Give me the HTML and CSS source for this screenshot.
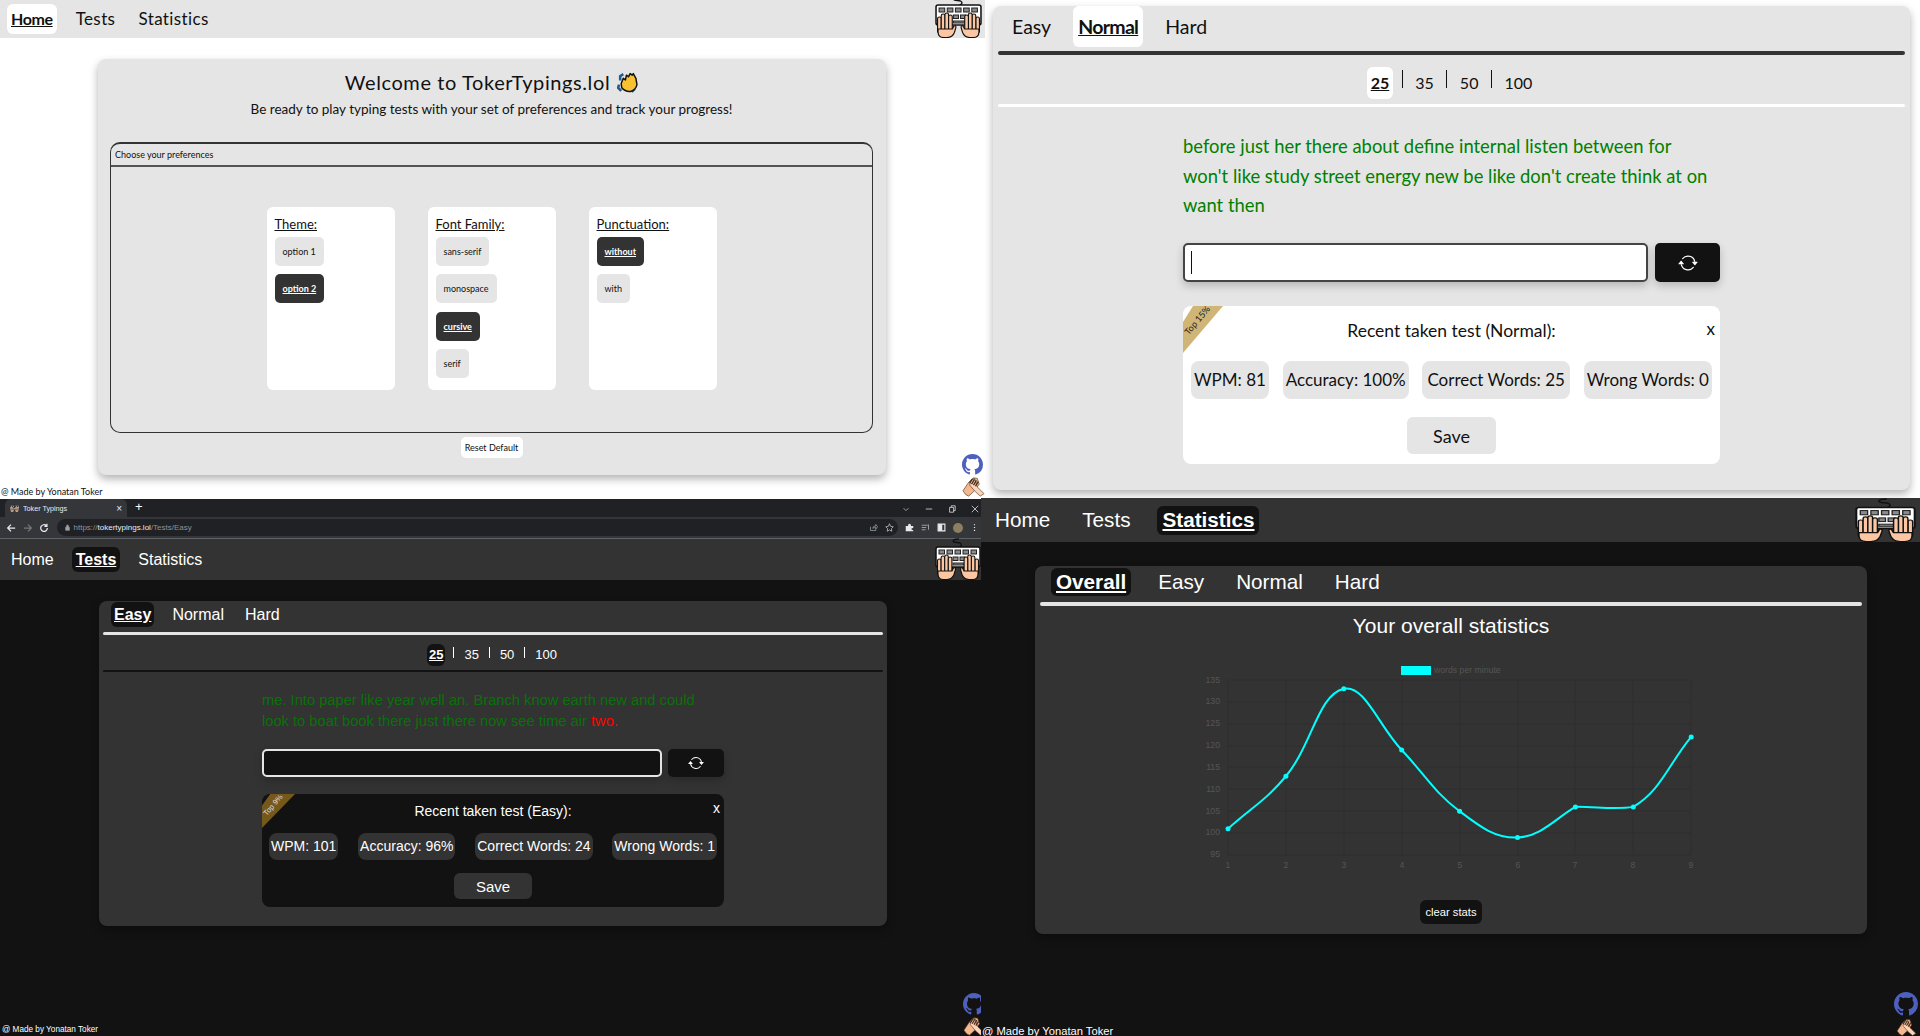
FILE: index.html

```html
<!DOCTYPE html>
<html lang="en">
<head>
    <meta charset="UTF-8">
    <title>Toker Typings</title>
    <link rel="stylesheet" href="styles.css">
</head>
<body>
    <svg class="icon-defs" width="0" height="0">
        <symbol id="logo" viewBox="0 0 46 42" preserveAspectRatio="none">
            <path d="M21 10 C28 9 28 4.500 22 4.500 C16 4.500 17 1 24 1" fill="none" stroke="#111" stroke-width="1.300"/>
            <rect x="1" y="9" width="44" height="20" rx="2" fill="#fff" stroke="#111" stroke-width="1.500"/>
            <g fill="#8a8a8a" stroke="#222" stroke-width="1">
                <rect x="4" y="12" width="5.500" height="4"/>
                <rect x="12" y="12" width="5.500" height="4"/>
                <rect x="20" y="12" width="5.500" height="4"/>
                <rect x="28" y="12" width="5.500" height="4"/>
                <rect x="36" y="12" width="5.500" height="4"/>
                <rect x="18" y="19" width="5" height="3.500"/>
                <rect x="25" y="19" width="5" height="3.500"/>
                <rect x="18" y="25" width="11" height="2"/>
            </g>
            <g id="logo-hand" fill="#fcc6a2" stroke="#111" stroke-width="1.100">
                <rect x="2.500" y="21" width="3.600" height="16" rx="1.800"/>
                <rect x="6.100" y="18" width="3.600" height="18" rx="1.800"/>
                <rect x="9.700" y="17" width="3.600" height="19" rx="1.800"/>
                <rect x="13.300" y="19" width="3.600" height="17" rx="1.800"/>
                <path d="M3 33 H17 L18.500 30 Q20.500 29 20.500 31.500 L19 36.500 Q17 41.500 12 41.500 H8.500 Q3 41.500 3 36 Z"/>
            </g>
            <use href="#logo-hand" transform="matrix(-1 0 0 1 46 0)"/>
        </symbol>
        <symbol id="github" viewBox="0 0 16 16">
            <path fill="#4f5fbd" d="M8 0C3.58 0 0 3.58 0 8c0 3.54 2.29 6.53 5.47 7.59.4.07.55-.17.55-.38 0-.19-.01-.82-.01-1.49-2.01.37-2.53-.49-2.69-.94-.09-.23-.48-.94-.82-1.13-.28-.15-.68-.52-.01-.53.63-.01 1.08.58 1.23.82.72 1.21 1.87.87 2.33.66.07-.52.28-.87.51-1.07-1.78-.2-3.64-.89-3.64-3.95 0-.87.31-1.59.82-2.15-.08-.2-.36-1.02.08-2.12 0 0 .67-.21 2.2.82.64-.18 1.32-.27 2-.27.68 0 1.36.09 2 .27 1.53-1.04 2.2-.82 2.2-.82.44 1.1.16 1.92.08 2.12.51.56.82 1.27.82 2.15 0 3.07-1.87 3.75-3.65 3.95.29.25.54.73.54 1.48 0 1.07-.01 1.93-.01 2.2 0 .21.15.46.55.38A8.013 8.013 0 0016 8c0-4.42-3.58-8-8-8z"/>
        </symbol>
        <symbol id="handshake" viewBox="0 0 24 20">
            <path d="M1 14 L7 5 L12 0.500 L16 1 L18 7 L13 14 L7 19.500 L4 18 Z" fill="#f4b88f" stroke="#5a3b28" stroke-width="0.700"/>
            <path d="M23 17 L16 10 L13 1 L9 3 L8 8 L13 14 L19 19.500 Z" fill="#fbd4b6" stroke="#5a3b28" stroke-width="0.700"/>
            <path d="M8 6 L11 1.500 M10 7 L13 2 M12 8 L15 3 M14 9 L17 4.500" stroke="#4a2f1e" stroke-width="1.400"/>
        </symbol>
        <symbol id="refresh" viewBox="0 0 16 16">
            <path fill="currentColor" d="M11.534 7h3.932a.25.25 0 0 1 .192.41l-1.966 2.36a.25.25 0 0 1-.384 0l-1.966-2.36a.25.25 0 0 1 .192-.41zm-11 2h3.932a.25.25 0 0 0 .192-.41L2.692 6.23a.25.25 0 0 0-.384 0L.342 8.59A.25.25 0 0 0 .534 9z"/>
            <path fill="currentColor" d="M8 3c-1.552 0-2.94.707-3.857 1.818a.5.5 0 1 1-.771-.636A6.002 6.002 0 0 1 13.917 7H12.9A5.002 5.002 0 0 0 8 3zM3.1 9a5.002 5.002 0 0 0 8.757 2.182.5.5 0 1 1 .771.636A6.002 6.002 0 0 1 2.083 9H3.1z"/>
        </symbol>
    </svg>

    <div class="row row-top">
        <!-- home page, light theme -->
        <section class="pane pane-home light">
            <nav class="nav">
                <a class="nav-item active">Home</a>
                <a class="nav-item">Tests</a>
                <a class="nav-item">Statistics</a>
                <svg class="nav-logo"><use href="#logo"/></svg>
            </nav>
            <div class="card welcome">
                <h1>Welcome to TokerTypings.lol
                    <svg class="clap" viewBox="0 0 20 20">
                        <path d="M2 12 L1 15 L4 18 M6 2 L3 4 L3 8 M17 16 L14 19" fill="none" stroke="#1f5c92" stroke-width="2.400"/>
                        <path d="M4 11 L6 6 L8 7.500 L9 3 L11 4.500 L12.500 1.500 L14.500 3 L15.500 1.500 L18 6 L19 12 Q18 17 13 18.500 Q8 19 4.500 15 Z" fill="#f6c232" stroke="#111" stroke-width="1.400" stroke-linejoin="round"/>
                    </svg>
                </h1>
                <p class="welcome-sub">Be ready to play typing tests with your set of preferences and track your progress!</p>
                <div class="prefs">
                    <div class="prefs-head">Choose your preferences</div>
                    <div class="prefs-cols">
                        <div class="prefs-col">
                            <h4>Theme:</h4>
                            <a class="opt">option 1</a>
                            <a class="opt on">option 2</a>
                        </div>
                        <div class="prefs-col">
                            <h4>Font Family:</h4>
                            <a class="opt">sans-serif</a>
                            <a class="opt">monospace</a>
                            <a class="opt on">cursive</a>
                            <a class="opt">serif</a>
                        </div>
                        <div class="prefs-col">
                            <h4>Punctuation:</h4>
                            <a class="opt on">without</a>
                            <a class="opt">with</a>
                        </div>
                    </div>
                </div>
                <button class="reset">Reset Default</button>
            </div>
            <div class="made">@ Made by Yonatan Toker</div>
            <svg class="corner-github"><use href="#github"/></svg>
            <svg class="corner-shake"><use href="#handshake"/></svg>
        </section>

        <!-- tests page, normal level -->
        <section class="pane pane-normal light">
            <div class="card tests">
                <div class="tabs">
                    <a class="tab">Easy</a>
                    <a class="tab active">Normal</a>
                    <a class="tab">Hard</a>
                </div>
                <div class="rule rule-main"></div>
                <div class="counts">
                    <a class="count active">25</a><i></i>
                    <a class="count">35</a><i></i>
                    <a class="count">50</a><i></i>
                    <a class="count">100</a>
                </div>
                <div class="rule rule-sub"></div>
                <div class="play">
                    <p class="words">before just her there about define internal listen between for won't like study street energy new be like don't create think at on want then</p>
                    <div class="entry">
                        <div class="entry-input"><span class="caret"></span></div>
                        <button class="entry-btn"><svg><use href="#refresh"/></svg></button>
                    </div>
                    <div class="recent">
                        <div class="ribbon"><span>Top 15%</span></div>
                        <span class="recent-x">x</span>
                        <div class="recent-title">Recent taken test (Normal):</div>
                        <div class="stats">
                            <span>WPM: 81</span>
                            <span>Accuracy: 100%</span>
                            <span>Correct Words: 25</span>
                            <span>Wrong Words: 0</span>
                        </div>
                        <button class="save">Save</button>
                    </div>
                </div>
            </div>
        </section>
    </div>

    <div class="row row-bottom">
        <!-- tests page, easy level, dark theme, with the browser around it -->
        <section class="pane pane-easy dark">
            <div class="chrome-tabs">
                <div class="chrome-tab">
                    <svg class="chrome-fav"><use href="#logo"/></svg>
                    <span>Toker Typings</span>
                    <b>×</b>
                </div>
                <span class="chrome-plus">+</span>
                <div class="chrome-win">
                    <svg viewBox="0 0 10 10"><path d="M2 4 L5 7 L8 4" fill="none" stroke="#bbb"/></svg>
                    <svg viewBox="0 0 10 10"><path d="M1 5 H9" stroke="#ddd"/></svg>
                    <svg viewBox="0 0 10 10"><path d="M2 3 H7 V9 H2 Z M4 3 V1 H9 V7 H7" fill="none" stroke="#ddd"/></svg>
                    <svg viewBox="0 0 10 10"><path d="M1 1 L9 9 M9 1 L1 9" stroke="#ddd"/></svg>
                </div>
            </div>
            <div class="chrome-bar">
                <svg class="chrome-btn" viewBox="0 0 12 12"><path d="M11 6 H2 M6 2 L2 6 L6 10" fill="none" stroke="#e8eaed" stroke-width="1.500"/></svg>
                <svg class="chrome-btn" viewBox="0 0 12 12"><path d="M1 6 H10 M6 2 L10 6 L6 10" fill="none" stroke="#777" stroke-width="1.500"/></svg>
                <svg class="chrome-btn" viewBox="0 0 12 12"><path d="M10 6 A4 4 0 1 1 8.800 3.200 M9.500 1 V4 H6.500" fill="none" stroke="#e8eaed" stroke-width="1.500"/></svg>
                <div class="omnibox">
                    <svg class="chrome-lock" viewBox="0 0 8 10"><path d="M1 4.500 H7 V9.500 H1 Z M2.500 4.500 V2.500 A1.500 1.500 0 0 1 5.500 2.500 V4.500" fill="#9aa0a6" stroke="#9aa0a6"/></svg>
                    <span class="url"><span>https://</span>tokertypings.lol<span>/Tests/Easy</span></span>
                    <svg class="chrome-mini" viewBox="0 0 12 12"><path d="M2 5 V10 H9 V8 M5 7 Q5 4 9 4 V2 L11.500 5 L9 8 V6 Q7 6 5 7" fill="none" stroke="#9aa0a6"/></svg>
                    <svg class="chrome-mini" viewBox="0 0 12 12"><path d="M6 1 L7.500 4.500 L11 5 L8.500 7.500 L9 11 L6 9.200 L3 11 L3.500 7.500 L1 5 L4.500 4.500 Z" fill="none" stroke="#c4c7c5"/></svg>
                </div>
                <div class="chrome-tools">
                    <svg viewBox="0 0 12 12"><path d="M1 4 H4 Q4 1 6 1 Q8 1 8 4 H11 V6.500 Q8.500 6.500 8.500 8 Q8.500 9.500 11 9.500 V11 H1 Z" fill="#e8eaed"/></svg>
                    <svg viewBox="0 0 12 12"><path d="M1 3 H9 M1 6 H7 M1 9 H6 M10 2 V9" stroke="#9aa0a6" stroke-width="1.300"/></svg>
                    <svg viewBox="0 0 12 12"><path d="M1.500 1.500 H10.500 V10.500 H1.500 Z" fill="#35363a" stroke="#e8eaed" stroke-width="1.500"/><path d="M1.500 1.500 H7 V10.500 H1.500 Z" fill="#e8eaed"/></svg>
                    <span class="chrome-avatar"></span>
                    <svg viewBox="0 0 12 12"><path d="M6 1.500 V3 M6 5.200 V6.700 M6 9 V10.500" stroke="#e8eaed" stroke-width="1.600"/></svg>
                </div>
            </div>
            <nav class="nav">
                <a class="nav-item">Home</a>
                <a class="nav-item active">Tests</a>
                <a class="nav-item">Statistics</a>
                <svg class="nav-logo"><use href="#logo"/></svg>
            </nav>
            <div class="card tests">
                <div class="tabs">
                    <a class="tab active">Easy</a>
                    <a class="tab">Normal</a>
                    <a class="tab">Hard</a>
                </div>
                <div class="rule rule-main"></div>
                <div class="counts">
                    <a class="count active">25</a><i></i>
                    <a class="count">35</a><i></i>
                    <a class="count">50</a><i></i>
                    <a class="count">100</a>
                </div>
                <div class="rule rule-sub"></div>
                <div class="play">
                    <p class="words">me. Into paper like year well an. Branch know earth new and could look to boat book there just there now see time air <em>two.</em></p>
                    <div class="entry">
                        <div class="entry-input"></div>
                        <button class="entry-btn"><svg><use href="#refresh"/></svg></button>
                    </div>
                    <div class="recent">
                        <div class="ribbon"><span>Top 9%</span></div>
                        <span class="recent-x">x</span>
                        <div class="recent-title">Recent taken test (Easy):</div>
                        <div class="stats">
                            <span>WPM: 101</span>
                            <span>Accuracy: 96%</span>
                            <span>Correct Words: 24</span>
                            <span>Wrong Words: 1</span>
                        </div>
                        <button class="save">Save</button>
                    </div>
                </div>
            </div>
            <div class="made">@ Made by Yonatan Toker</div>
            <svg class="corner-github"><use href="#github"/></svg>
            <svg class="corner-shake"><use href="#handshake"/></svg>
        </section>

        <!-- statistics page, dark theme -->
        <section class="pane pane-stats dark">
            <nav class="nav">
                <a class="nav-item">Home</a>
                <a class="nav-item">Tests</a>
                <a class="nav-item active">Statistics</a>
                <svg class="nav-logo"><use href="#logo"/></svg>
            </nav>
            <div class="card graph">
                <div class="tabs">
                    <a class="tab active">Overall</a>
                    <a class="tab">Easy</a>
                    <a class="tab">Normal</a>
                    <a class="tab">Hard</a>
                </div>
                <div class="rule rule-main"></div>
                <h3 class="graph-title">Your overall statistics</h3>
                <svg class="chart" viewBox="0 0 540 240">
                    <g class="chart-grid">
                        <path d="M48 30 H511 M48 52 H511 M48 74 H511 M48 96 H511 M48 117 H511 M48 139 H511 M48 161 H511 M48 183 H511 M48 205 H511"/>
                        <path d="M48 30 V205 M106 30 V205 M164 30 V205 M222 30 V205 M280 30 V205 M338 30 V205 M395 30 V205 M453 30 V205 M511 30 V205"/>
                    </g>
                    <rect x="221" y="16" width="30" height="9" fill="#00ffff"/>
                    <g class="chart-label">
                        <text x="254" y="23">words per minute</text>
                    </g>
                    <g class="chart-label chart-y">
                        <text x="40" y="33">135</text>
                        <text x="40" y="54">130</text>
                        <text x="40" y="76">125</text>
                        <text x="40" y="98">120</text>
                        <text x="40" y="120">115</text>
                        <text x="40" y="142">110</text>
                        <text x="40" y="164">105</text>
                        <text x="40" y="185">100</text>
                        <text x="40" y="207">95</text>
                    </g>
                    <g class="chart-label chart-x">
                        <text x="48" y="218">1</text>
                        <text x="106" y="218">2</text>
                        <text x="164" y="218">3</text>
                        <text x="222" y="218">4</text>
                        <text x="280" y="218">5</text>
                        <text x="338" y="218">6</text>
                        <text x="395" y="218">7</text>
                        <text x="453" y="218">8</text>
                        <text x="511" y="218">9</text>
                    </g>
                    <path class="chart-line" d="M48 178.750 C71.200 157.750 86.100 150.200 105.900 126.250 C132.400 94.150 138.100 44.600 163.800 38.750 C184.400 34.050 198.500 75.500 221.700 100 C244.900 124.500 253.200 141.300 279.600 161.250 C299.500 176.300 314.700 188.400 337.500 187.500 C361 186.600 376 168 395.400 156.875 C415 156.500 435 160 453.300 156.875 C481.600 139.800 488 114.900 511.200 86.875"/>
                    <g fill="#00ffff">
                        <circle cx="48" cy="178.750" r="2.500"/>
                        <circle cx="105.900" cy="126.250" r="2.500"/>
                        <circle cx="163.800" cy="38.750" r="2.500"/>
                        <circle cx="221.700" cy="100" r="2.500"/>
                        <circle cx="279.600" cy="161.250" r="2.500"/>
                        <circle cx="337.500" cy="187.500" r="2.500"/>
                        <circle cx="395.400" cy="156.875" r="2.500"/>
                        <circle cx="453.300" cy="156.875" r="2.500"/>
                        <circle cx="511.200" cy="86.875" r="2.500"/>
                    </g>
                </svg>
                <button class="clear">clear stats</button>
            </div>
            <div class="made">@ Made by Yonatan Toker</div>
            <svg class="corner-github"><use href="#github"/></svg>
            <svg class="corner-shake"><use href="#handshake"/></svg>
        </section>
    </div>
</body>
</html>
```

FILE: styles.css

```css
* {
    box-sizing: border-box;
}
html, body {
    margin: 0;
    padding: 0;
    width: 1920px;
    height: 1036px;
    overflow: hidden;
    background: #fff;
}
a {
    display: block;
}
button {
    border: none;
    font: inherit;
    color: inherit;
    padding: 0;
}
.icon-defs {
    position: absolute;
}

.row {
    display: flex;
}
.row-top {
    height: 498px;
}
.row-bottom {
    height: 538px;
}
.pane {
    position: relative;
    overflow: hidden;
    flex: none;
}
.pane-home {
    width: 985px;
}
.pane-normal {
    width: 935px;
    padding: 6px 0 0 8px;
}
.pane-easy {
    width: 981px;
}
.pane-stats {
    width: 939px;
}

/* themes */
.light {
    --bar: #e5e5e5;
    --soft: #e5e5e5;
    --pill: #fff;
    background: #fff;
    color: #111;
    font-family: "Lato", "Open Sans", sans-serif;
}
.dark {
    --bar: #333;
    --soft: #333;
    --pill: #121212;
    background: #121212;
    color: #fff;
    font-family: "Liberation Sans", Arial, sans-serif;
}

/* top nav */
.nav {
    display: flex;
    align-items: center;
    background: var(--bar);
}
.nav-item {
    border-radius: 6px;
    text-align: center;
}
.nav-item.active {
    background: var(--pill);
    font-weight: bold;
    text-decoration: underline;
}
.nav-logo {
    margin-left: auto;
    display: block;
    flex: none;
    align-self: flex-end;
}
.pane-home .nav {
    height: 38px;
    padding: 0 3px 0 7px;
    gap: 15px;
    font-size: 17px;
}
.pane-home .nav-item {
    padding: 5px 4px;
    height: 30px;
    line-height: 20px;
    letter-spacing: 0.4px;
}
.pane-home .nav-item.active {
    font-size: 16px;
    letter-spacing: -0.4px;
}
.pane-home .nav-logo {
    width: 47px;
    height: 42px;
}
.pane-easy .nav {
    height: 41px;
    padding: 0 0 0 7px;
    gap: 14px;
    font-size: 16px;
}
.pane-easy .nav-item {
    padding: 3px 4px;
    height: 25px;
    line-height: 19px;
}
.pane-easy .nav-logo {
    width: 46px;
    height: 42px;
}
.pane-stats .nav {
    height: 44px;
    padding: 0 4px 0 10px;
    gap: 22px;
    font-size: 20.700px;
}
.pane-stats .nav-item {
    padding: 2px 5px;
    height: 29px;
    line-height: 23px;
}
.pane-stats .nav-item:first-child {
    padding-left: 4px;
}
.pane-stats .nav-logo {
    width: 61px;
    height: 44px;
}

/* cards */
.card {
    background: var(--bar);
    border-radius: 8px;
    box-shadow: 0 4px 8px rgba(0, 0, 0, 0.3);
}
.welcome {
    width: 788px;
    height: 416px;
    margin: 21px 0 0 98px;
    padding: 11px 13px 0 12px;
    text-align: center;
}
.welcome h1 {
    margin: 0;
    height: 24px;
    font-size: 20px;
    line-height: 24px;
    font-weight: normal;
    letter-spacing: 0.6px;
    display: flex;
    justify-content: center;
    align-items: center;
    gap: 7px;
}
.clap {
    width: 21px;
    height: 21px;
}
.welcome-sub {
    margin: 7px 0 0;
    font-size: 13.500px;
    line-height: 16px;
}
.prefs {
    margin-top: 25px;
    height: 291px;
    border: 1px solid #333;
    border-top-width: 2px;
    border-radius: 10px;
    text-align: left;
}
.prefs-head {
    height: 23px;
    border-bottom: 2px solid #555;
    font-size: 9px;
    line-height: 21px;
    padding-left: 4px;
}
.prefs-cols {
    display: flex;
    justify-content: center;
    gap: 33px;
    margin-top: 40px;
}
.prefs-col {
    width: 128px;
    height: 183px;
    background: #fff;
    border-radius: 6px;
    padding: 9px 8px;
}
.prefs-col h4 {
    margin: 0 0 5px;
    font-size: 13px;
    line-height: 16px;
    font-weight: normal;
    text-decoration: underline;
}
.opt {
    width: max-content;
    height: 29px;
    line-height: 29px;
    padding: 0 8px;
    margin-bottom: 8.300px;
    font-size: 9px;
    background: #e5e5e5;
    border-radius: 5px;
}
.opt.on {
    background: #333;
    color: #fff;
    text-decoration: underline;
    font-weight: bold;
}
.reset {
    display: block;
    margin: 4px auto 0;
    width: 62px;
    height: 21px;
    background: #fff;
    border-radius: 5px;
    font-size: 9px;
}

/* tests card */
.tests {
    position: relative;
}
.tabs {
    display: flex;
}
.tab {
    border-radius: 6px;
    text-align: center;
}
.tab.active {
    background: var(--pill);
    font-weight: bold;
    text-decoration: underline;
}
.rule {
    border-radius: 3px;
}
.rule-main {
    background: #333;
}
.rule-sub {
    background: #fff;
}
.dark .rule-main {
    background: #e5e5e5;
}
.dark .rule-sub {
    background: #121212;
}
.counts {
    display: flex;
    justify-content: center;
}
.count {
    border-radius: 6px;
    text-align: center;
}
.count.active {
    background: var(--pill);
    font-weight: bold;
    text-decoration: underline;
}
.counts i {
    display: block;
    width: 1px;
    background: currentColor;
}
.words {
    margin: 0;
    color: #008000;
}
.words em {
    font-style: normal;
    color: #f00;
}
.entry {
    display: flex;
}
.entry-input {
    background: #fff;
    border: 2px solid #444;
    border-radius: 5px;
    box-shadow: 0 4px 8px rgba(0, 0, 0, 0.2);
}
.caret {
    display: block;
    width: 1px;
    background: #111;
}
.entry-btn {
    background: #121212;
    color: #fff;
    border-radius: 5px;
    box-shadow: 0 4px 8px rgba(0, 0, 0, 0.2);
    display: flex;
    align-items: center;
    justify-content: center;
}
.recent {
    position: relative;
    overflow: hidden;
    background: #fff;
    border-radius: 8px;
    text-align: center;
}
.ribbon {
    position: absolute;
    left: 0;
    top: 0;
    clip-path: polygon(25% 0, 100% 0, 0 100%, 0 34%);
    color: #222;
}
.ribbon span {
    position: absolute;
    white-space: nowrap;
    transform: translate(-50%, -50%) rotate(-50deg);
}
.recent-x {
    position: absolute;
}
.stats {
    display: flex;
    justify-content: space-between;
}
.stats span {
    background: var(--soft);
    border-radius: 8px;
    text-align: center;
}
.save {
    display: block;
    margin: 0 auto;
    background: var(--soft);
    border-radius: 6px;
}

/* normal level sizes */
.pane-normal .tests {
    width: 917px;
    height: 484px;
    padding: 0 5px;
}
.pane-normal .tabs {
    height: 45px;
    padding-left: 9px;
    font-size: 19.500px;
    gap: 17px;
    align-items: flex-start;
}
.pane-normal .tab {
    height: 41px;
    line-height: 42px;
    padding: 0 5px;
}
.pane-normal .tab.active {
    letter-spacing: -0.700px;
}
.pane-normal .rule-main {
    height: 4px;
}
.pane-normal .rule-sub {
    height: 3px;
}
.pane-normal .counts {
    height: 49px;
    padding: 12px 0 0;
    font-size: 16px;
}
.pane-normal .count {
    height: 32px;
    line-height: 32px;
    padding: 0 3.500px;
}
.pane-normal .counts i {
    height: 18px;
    margin: 3px 9px 0;
}
.pane-normal .play {
    width: 537px;
    margin: 25px 0 0 185px;
}
.pane-normal .words {
    font-size: 18.400px;
    line-height: 29.500px;
    height: 89px;
}
.pane-normal .entry {
    margin-top: 22px;
    gap: 7px;
    height: 39px;
}
.pane-normal .entry-input {
    width: 465px;
    padding: 6px;
}
.pane-normal .caret {
    height: 23px;
}
.pane-normal .entry-btn {
    width: 65px;
}
.pane-normal .entry-btn svg {
    width: 20px;
    height: 20px;
}
.pane-normal .recent {
    margin-top: 24px;
    height: 158px;
}
.pane-normal .ribbon {
    width: 40px;
    height: 47px;
    background: #cfb576;
}
.pane-normal .ribbon span {
    font-size: 9px;
    left: 13.500px;
    top: 14px;
}
.pane-normal .recent-x {
    right: 5px;
    top: 12px;
    font-size: 17px;
}
.pane-normal .recent-title {
    padding-top: 14px;
    height: 55px;
    font-size: 17.500px;
    line-height: 22px;
}
.pane-normal .stats {
    padding: 0 8px;
}
.pane-normal .stats span {
    height: 38px;
    line-height: 38px;
    font-size: 17px;
    padding: 0 3px;
}
.pane-normal .stats span:nth-child(3) {
    padding: 0 5px;
}
.pane-normal .save {
    margin-top: 18px;
    width: 89px;
    height: 37px;
    font-size: 18px;
}

/* browser chrome around the dark page */
.chrome-tabs {
    height: 19px;
    border-top: 1px solid #fff;
    background: #202124;
    display: flex;
    align-items: flex-end;
    padding-left: 5px;
}
.chrome-tab {
    width: 122px;
    height: 18px;
    background: #35363a;
    border-radius: 6px 6px 0 0;
    display: flex;
    align-items: center;
    padding: 0 5px;
    font-size: 7.200px;
    color: #e8eaed;
}
.chrome-fav {
    width: 9px;
    height: 8px;
    margin-right: 4px;
}
.chrome-tab b {
    margin-left: auto;
    font-weight: normal;
    font-size: 10px;
}
.chrome-plus {
    margin: 0 0 2px 8px;
    font-size: 13px;
    line-height: 16px;
}
.chrome-win {
    margin-left: auto;
    display: flex;
    gap: 15px;
    padding: 0 2px 4px 0;
}
.chrome-win svg {
    width: 8px;
    height: 8px;
}
.chrome-bar {
    height: 22px;
    background: #35363a;
    border-bottom: 1px solid #5f6368;
    display: flex;
    align-items: center;
    padding-left: 6px;
}
.chrome-btn {
    width: 10px;
    height: 10px;
    margin-right: 6.500px;
}
.omnibox {
    width: 841px;
    height: 17px;
    margin-left: 1px;
    background: #202124;
    border-radius: 9px;
    display: flex;
    align-items: center;
    padding: 0 4px 0 8px;
}
.chrome-lock {
    width: 5px;
    height: 7px;
    margin-right: 4px;
}
.url {
    font-size: 8px;
    color: #e8eaed;
}
.url span {
    color: #8e9196;
}
.chrome-mini {
    width: 9px;
    height: 9px;
}
.url + .chrome-mini {
    margin-left: auto;
    margin-right: 7px;
}
.chrome-tools {
    display: flex;
    align-items: center;
    gap: 7px;
    padding-left: 7px;
}
.chrome-tools svg {
    width: 9px;
    height: 9px;
}
.chrome-avatar {
    width: 10px;
    height: 10px;
    border-radius: 50%;
    background: #8a7f5e;
}

/* easy level sizes */
.pane-easy .tests {
    width: 788px;
    height: 325px;
    margin: 21px 0 0 99px;
    padding: 1px 4px 0;
}
.pane-easy .tabs {
    height: 30px;
    padding-left: 8px;
    font-size: 16px;
    gap: 15px;
}
.pane-easy .tab {
    height: 25px;
    line-height: 25px;
    padding: 0 3px;
}
.pane-easy .rule-main {
    height: 3px;
}
.pane-easy .rule-sub {
    height: 2px;
}
.pane-easy .counts {
    height: 35px;
    padding: 9px 0 0;
    font-size: 13px;
}
.pane-easy .count {
    height: 22px;
    line-height: 22px;
    padding: 0 2px;
}
.pane-easy .counts i {
    height: 11px;
    margin: 3px 8px 0;
}
.pane-easy .play {
    width: 462px;
    margin: 18px 0 0 159px;
}
.pane-easy .words {
    width: 440px;
    font-size: 14.700px;
    line-height: 21px;
    height: 42px;
    color: #0a700a;
}
.pane-easy .entry {
    margin-top: 17px;
    gap: 6px;
    height: 28px;
}
.pane-easy .entry-input {
    width: 400px;
    background: #121212;
    border-color: #e5e5e5;
}
.pane-easy .entry-btn {
    width: 56px;
}
.pane-easy .entry-btn svg {
    width: 16px;
    height: 16px;
}
.pane-easy .recent {
    margin-top: 17px;
    height: 113px;
    background: #121212;
}
.pane-easy .ribbon {
    width: 33px;
    height: 34px;
    background: #75591c;
    color: #ddd;
}
.pane-easy .ribbon span {
    font-size: 7.500px;
    left: 11px;
    top: 11px;
}
.pane-easy .recent-x {
    right: 4px;
    top: 6px;
    font-size: 14px;
}
.pane-easy .recent-title {
    padding-top: 9px;
    height: 39px;
    font-size: 14px;
    line-height: 17px;
}
.pane-easy .stats {
    padding: 0 7px;
}
.pane-easy .stats span {
    height: 27px;
    line-height: 27px;
    font-size: 14px;
    padding: 0 2px;
}
.pane-easy .save {
    margin-top: 13px;
    width: 78px;
    height: 26px;
    font-size: 15px;
}

/* statistics card */
.graph {
    width: 832px;
    height: 368px;
    margin: 24px 0 0 54px;
    padding: 2px 5px 0;
    text-align: center;
}
.graph .tabs {
    height: 34px;
    padding-left: 11px;
    gap: 22px;
    font-size: 20.700px;
}
.graph .tab {
    height: 28px;
    line-height: 28px;
    padding: 0 5px;
}
.graph .rule-main {
    height: 4px;
}
.graph-title {
    margin: 7px 0 0;
    height: 29px;
    font-size: 21px;
    line-height: 26px;
    font-weight: normal;
}
.chart {
    display: block;
    width: 540px;
    height: 240px;
    margin: 8px 0 0 140px;
}
.chart-grid path {
    fill: none;
    stroke: #2e2e2e;
    stroke-width: 1;
}
.chart-label {
    font-size: 8.700px;
    fill: #555;
}
.chart-y {
    text-anchor: end;
}
.chart-x {
    text-anchor: middle;
}
.chart-line {
    fill: none;
    stroke: #00ffff;
    stroke-width: 2;
}
.clear {
    display: block;
    margin: 10px auto 0;
    width: 62px;
    height: 24px;
    background: #121212;
    border-radius: 6px;
    font-size: 11.200px;
}

/* footer text and corner icons */
.made {
    position: absolute;
    left: 1px;
    white-space: nowrap;
}
.pane-home .made {
    top: 486px;
    font-size: 9px;
    line-height: 11px;
}
.pane-easy .made {
    bottom: 1px;
    left: 2px;
    font-size: 8.200px;
    line-height: 11px;
}
.pane-stats .made {
    bottom: -2px;
    left: 1px;
    font-size: 11.200px;
    line-height: 14px;
}
.corner-github, .corner-shake {
    position: absolute;
}
.pane-home .corner-github {
    left: 962px;
    top: 454px;
    width: 21px;
    height: 21px;
}
.pane-home .corner-shake {
    left: 962px;
    top: 477px;
    width: 23px;
    height: 20px;
}
.pane-easy .corner-github {
    left: 963px;
    top: 495px;
    width: 22px;
    height: 22px;
}
.pane-easy .corner-shake {
    left: 963px;
    top: 519px;
    width: 22px;
    height: 19px;
}
.pane-stats .corner-github {
    left: 911px;
    top: 494px;
    width: 28px;
    height: 24px;
}
.pane-stats .corner-shake {
    left: 912px;
    top: 521px;
    width: 27px;
    height: 17px;
}
```
